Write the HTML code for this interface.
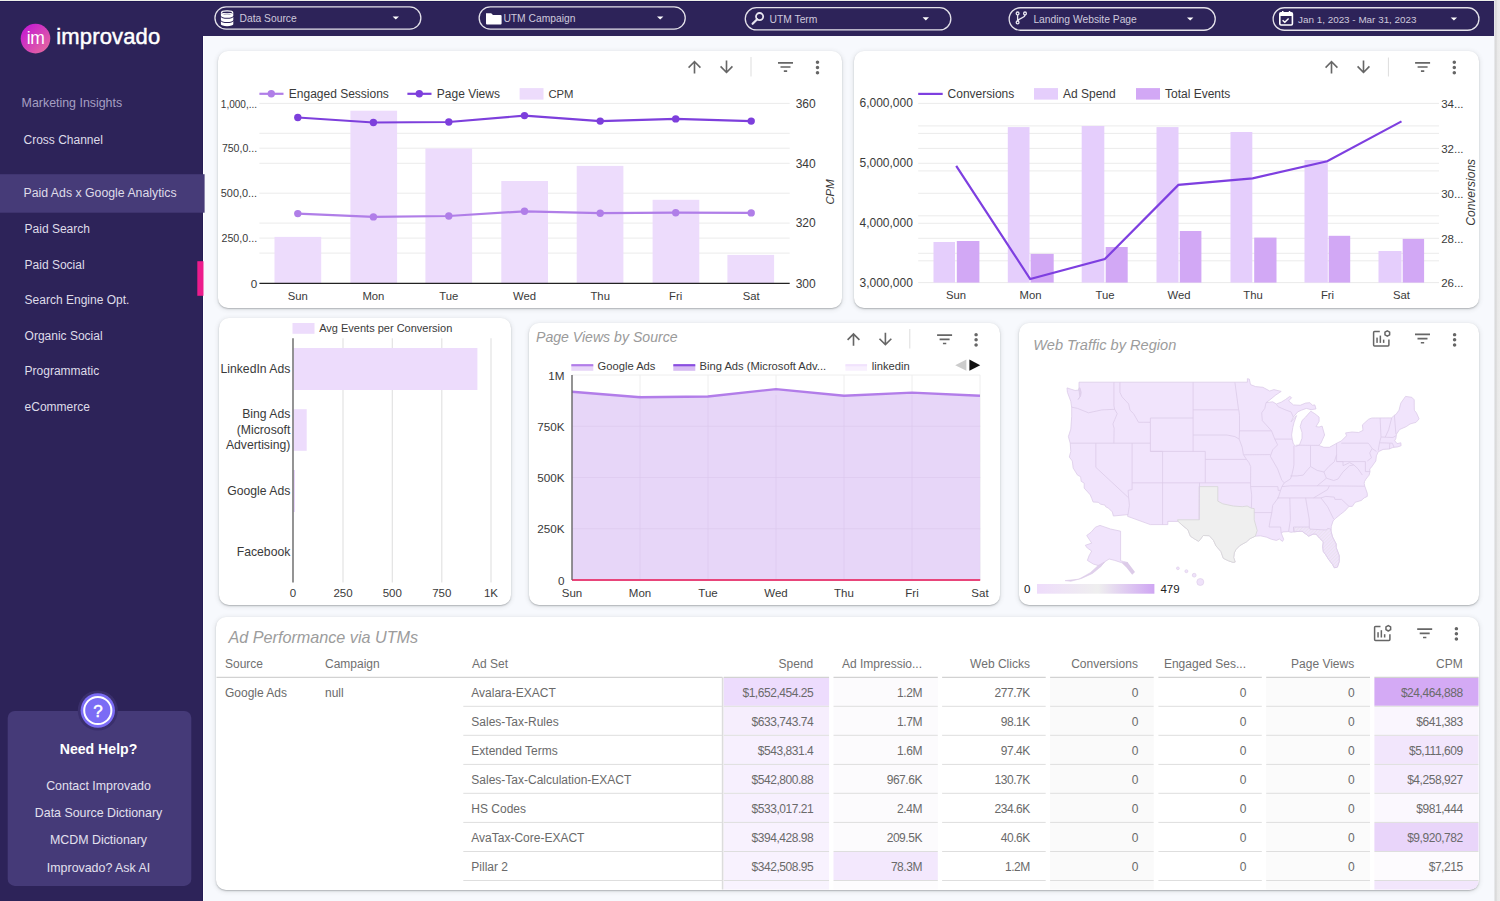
<!DOCTYPE html>
<html><head><meta charset="utf-8"><title>Improvado Dashboard</title>
<style>
html,body{margin:0;padding:0;width:1500px;height:901px;overflow:hidden;background:#f7f9fd;font-family:"Liberation Sans",sans-serif}
.abs{position:absolute}
.card{position:absolute;background:#fff;border-radius:10px;box-shadow:0 1px 1.5px rgba(60,64,67,.32),0 1px 4px 1px rgba(60,64,67,.10)}
svg text{font-family:"Liberation Sans",sans-serif}
</style></head><body>
<div class="abs" style="left:0;top:0;width:1500px;height:901px;background:#f7f9fd"></div>
<div class="abs" style="left:0;top:0;width:202.8px;height:901px;background:#2d2359"></div>
<div class="abs" style="left:202px;top:0;width:1293px;height:36px;background:#2d2359"></div>
<div class="abs" style="left:0;top:0;width:1495px;height:1px;background:#eef0ea"></div>
<div class="abs" style="left:0;top:1px;width:1495px;height:1px;background:#201852"></div>
<div class="abs" style="left:1494px;top:0;width:6px;height:901px;background:linear-gradient(to right,#eceef2 0px,#d9d9d9 1.6px,#dadada 2.2px,#e8e8e8 3.2px,#ececec 6px)"></div>
<div class="abs" style="left:202px;top:36px;width:1px;height:865px;background:#251c55"></div><div class="abs" style="left:203px;top:36px;width:1px;height:865px;background:#ffffff"></div>
<div class="card" style="left:217.5px;top:50.5px;width:624.0px;height:257.8px"></div>
<div class="card" style="left:854.3px;top:50.5px;width:624.4px;height:257.8px"></div>
<div class="card" style="left:218.8px;top:318px;width:292.5px;height:286.5px"></div>
<div class="card" style="left:529.3px;top:323px;width:471.0px;height:282.3px"></div>
<div class="card" style="left:1018.7px;top:323.3px;width:460.0px;height:282.0px"></div>
<div class="card" style="left:216.3px;top:616.7px;width:1262.7px;height:273.5px"></div>
<svg class="abs" style="left:0;top:0" width="1500" height="901" viewBox="0 0 1500 901">
<defs>
<linearGradient id="logoGrad" x1="0" y1="0" x2="1" y2="1"><stop offset="0" stop-color="#c010d8"/><stop offset="1" stop-color="#e8709a"/></linearGradient>
<linearGradient id="legGrad" x1="0" y1="0" x2="1" y2="0"><stop offset="0" stop-color="#eedcfb"/><stop offset="0.52" stop-color="#efefef"/><stop offset="1" stop-color="#cfa6f3"/></linearGradient>
<pattern id="hatch" width="2.4" height="2.4" patternUnits="userSpaceOnUse" patternTransform="rotate(45)"><rect width="2.4" height="2.4" fill="#f1e4fc"/><rect width="0.9" height="2.4" fill="#e9e2ee"/></pattern>
<clipPath id="tblClip"><rect x="216.3" y="616.7" width="1262.7" height="273.5" rx="10"/></clipPath>
</defs>
<circle cx="35.50" cy="38.60" r="14.8" fill="url(#logoGrad)" />
<text x="35.60" y="43.90" font-size="17.5" fill="#ffffff" text-anchor="middle" letter-spacing="-0.4">im</text>
<text x="56.30" y="43.80" font-size="22.0" fill="#ffffff" letter-spacing="0.15" stroke="#ffffff" stroke-width="0.45">improvado</text>
<text x="21.60" y="107.40" font-size="12.4" fill="#a59fc2" >Marketing Insights</text>
<text x="23.50" y="144.20" font-size="12" fill="#dfdce9" >Cross Channel</text>
<rect x="0.00" y="174.20" width="204.60" height="38.50" fill="#463b78" />
<text x="23.50" y="197.30" font-size="12.3" fill="#dfdce9" >Paid Ads x Google Analytics</text>
<text x="24.60" y="233.20" font-size="12" fill="#dfdce9" >Paid Search</text>
<text x="24.60" y="268.50" font-size="12" fill="#dfdce9" >Paid Social</text>
<text x="24.60" y="304.40" font-size="12" fill="#dfdce9" >Search Engine Opt.</text>
<text x="24.60" y="339.70" font-size="12" fill="#dfdce9" >Organic Social</text>
<text x="24.60" y="375.30" font-size="12" fill="#dfdce9" >Programmatic</text>
<text x="24.60" y="411.10" font-size="12" fill="#dfdce9" >eCommerce</text>
<rect x="197.30" y="261.20" width="6.20" height="34.60" fill="#ec1c8c" />
<rect x="7.7" y="710.9" width="183.6" height="175" rx="7" fill="#453a78"/>
<circle cx="97.80" cy="710.50" r="20" fill="#3a2f6c" />
<circle cx="97.80" cy="710.50" r="17.2" fill="#7b6cf5" />
<circle cx="97.80" cy="710.50" r="13.6" fill="none" stroke="#ffffff" stroke-width="2"/>
<text x="97.90" y="716.80" font-size="17" fill="#ffffff" text-anchor="middle" stroke="#ffffff" stroke-width="0.5">?</text>
<text x="98.50" y="753.80" font-size="14.1" fill="#ffffff" text-anchor="middle" font-weight="bold" >Need Help?</text>
<text x="98.50" y="789.80" font-size="12.4" fill="#e3e0ee" text-anchor="middle" >Contact Improvado</text>
<text x="98.50" y="817.30" font-size="12.4" fill="#e3e0ee" text-anchor="middle" >Data Source Dictionary</text>
<text x="98.50" y="844.40" font-size="12.4" fill="#e3e0ee" text-anchor="middle" >MCDM Dictionary</text>
<text x="98.50" y="872.00" font-size="12.4" fill="#e3e0ee" text-anchor="middle" >Improvado? Ask AI</text>
<rect x="214.95" y="6.85" width="205.90" height="22.30" rx="11.15" fill="none" stroke="#e4e2ea" stroke-width="1.3"/>
<path d="M392.60 16.40 L399.00 16.40 L395.80 19.60 Z" fill="#ffffff"/>
<path d="M220.90 12.60 v3.2 a6.2 2 0 0 0 12.4 0 v-3.2 a6.2 2 0 0 1 -12.4 0z" fill="#ffffff"/>
<path d="M220.90 16.80 v3.2 a6.2 2 0 0 0 12.4 0 v-3.2 a6.2 2 0 0 1 -12.4 0z" fill="#ffffff"/>
<path d="M220.90 21.00 v3.2 a6.2 2 0 0 0 12.4 0 v-3.2 a6.2 2 0 0 1 -12.4 0z" fill="#ffffff"/>
<ellipse cx="227.10" cy="12.3" rx="5.6" ry="1.5" fill="#2d2359" stroke="#ffffff" stroke-width="1.2"/>
<text x="239.50" y="22.20" font-size="10.3" fill="#cdc9dc" >Data Source</text>
<rect x="479.15" y="6.85" width="206.10" height="22.30" rx="11.15" fill="none" stroke="#e4e2ea" stroke-width="1.3"/>
<path d="M657.00 16.40 L663.40 16.40 L660.20 19.60 Z" fill="#ffffff"/>
<path d="M486 13.2 h5.2 l1.8 1.8 h7.6 a1 1 0 0 1 1 1 v7.6 a1 1 0 0 1 -1 1 h-13.6 a1 1 0 0 1 -1 -1z" fill="#ffffff"/>
<text x="503.40" y="22.20" font-size="10.3" fill="#cdc9dc" >UTM Campaign</text>
<rect x="745.25" y="7.65" width="205.60" height="22.30" rx="11.15" fill="none" stroke="#e4e2ea" stroke-width="1.3"/>
<path d="M922.60 17.20 L929.00 17.20 L925.80 20.40 Z" fill="#ffffff"/>
<circle cx="759.6" cy="16.6" r="3.6" fill="none" stroke="#e8e6f0" stroke-width="1.8"/><path d="M757.2 19.2 L752.6 23.8" stroke="#e8e6f0" stroke-width="2.2" stroke-linecap="round"/>
<text x="769.50" y="23.00" font-size="10.3" fill="#cdc9dc" >UTM Term</text>
<rect x="1009.15" y="7.75" width="206.10" height="22.50" rx="11.25" fill="none" stroke="#e4e2ea" stroke-width="1.3"/>
<path d="M1187.00 17.40 L1193.40 17.40 L1190.20 20.60 Z" fill="#ffffff"/>
<g fill="none" stroke="#e8e6f0" stroke-width="1.3"><circle cx="1017.6" cy="13.4" r="1.4"/><circle cx="1017.6" cy="22.4" r="1.4"/><circle cx="1025" cy="13.4" r="1.4"/><path d="M1017.6 14.8 V21 M1025 14.8 C1025 18.5 1018.5 17.5 1017.8 21"/></g>
<text x="1033.40" y="23.20" font-size="10.3" fill="#cdc9dc" >Landing Website Page</text>
<rect x="1273.15" y="7.75" width="205.80" height="22.50" rx="11.25" fill="none" stroke="#e4e2ea" stroke-width="1.3"/>
<path d="M1450.70 17.40 L1457.10 17.40 L1453.90 20.60 Z" fill="#ffffff"/>
<g><rect x="1279.8" y="12.8" width="12.6" height="12.2" rx="1.2" fill="none" stroke="#ffffff" stroke-width="1.6"/><rect x="1279.8" y="12.8" width="12.6" height="3.2" fill="#ffffff"/><rect x="1282" y="11" width="1.5" height="2.6" fill="#ffffff"/><rect x="1288.8" y="11" width="1.5" height="2.6" fill="#ffffff"/><path d="M1282.6 20.2 l2.2 2.1 l3.8 -3.9" fill="none" stroke="#ffffff" stroke-width="1.4"/></g>
<text x="1298.00" y="23.20" font-size="9.9" fill="#cdc9dc" >Jan 1, 2023 - Mar 31, 2023</text>
<path d="M4 12l1.41 1.41L11 7.83V20h2V7.83l5.58 5.59L20 12l-8-8-8 8z" fill="#666666" transform="translate(684.75,57.25) scale(0.8125)"/>
<path d="M20 12l-1.41-1.41L13 16.17V4h-2v12.17l-5.58-5.59L4 12l8 8 8-8z" fill="#666666" transform="translate(716.75,57.25) scale(0.8125)"/>
<line x1="751.00" y1="57.00" x2="751.00" y2="76.50" stroke="#dddddd" stroke-width="1" />
<path d="M10 18h4v-2h-4v2zM3 6v2h18V6H3zm3 7h12v-2H6v2z" fill="#666666" transform="translate(775.50,57.00) scale(0.833)"/>
<path d="M12 8c1.1 0 2-.9 2-2s-.9-2-2-2-2 .9-2 2 .9 2 2 2zm0 2c-1.1 0-2 .9-2 2s.9 2 2 2 2-.9 2-2-.9-2-2-2zm0 6c-1.1 0-2 .9-2 2s.9 2 2 2 2-.9 2-2-.9-2-2-2z" fill="#666666" transform="translate(807.18,57.18) scale(0.86)"/>
<line x1="259.40" y1="103.40" x2="789.70" y2="103.40" stroke="#ebebeb" stroke-width="1" />
<line x1="259.40" y1="133.30" x2="789.70" y2="133.30" stroke="#ebebeb" stroke-width="1" />
<line x1="259.40" y1="148.20" x2="789.70" y2="148.20" stroke="#ebebeb" stroke-width="1" />
<line x1="259.40" y1="163.30" x2="789.70" y2="163.30" stroke="#ebebeb" stroke-width="1" />
<line x1="259.40" y1="193.20" x2="789.70" y2="193.20" stroke="#ebebeb" stroke-width="1" />
<line x1="259.40" y1="223.10" x2="789.70" y2="223.10" stroke="#ebebeb" stroke-width="1" />
<line x1="259.40" y1="238.10" x2="789.70" y2="238.10" stroke="#ebebeb" stroke-width="1" />
<line x1="259.40" y1="253.10" x2="789.70" y2="253.10" stroke="#ebebeb" stroke-width="1" />
<rect x="274.50" y="236.90" width="46.70" height="46.40" fill="#eddcfc" />
<rect x="350.40" y="110.70" width="46.70" height="172.60" fill="#eddcfc" />
<rect x="425.40" y="148.40" width="46.70" height="134.90" fill="#eddcfc" />
<rect x="501.30" y="181.00" width="46.70" height="102.30" fill="#eddcfc" />
<rect x="576.70" y="165.90" width="46.70" height="117.40" fill="#eddcfc" />
<rect x="652.60" y="199.80" width="46.70" height="83.50" fill="#eddcfc" />
<rect x="727.40" y="254.90" width="46.70" height="28.40" fill="#eddcfc" />
<line x1="259.40" y1="283.40" x2="789.70" y2="283.40" stroke="#222222" stroke-width="1.3" />
<polyline points="297.80,213.60 373.40,216.90 448.80,216.00 524.50,211.30 600.20,213.20 675.70,212.70 751.20,212.90" stroke="#b07ee8" stroke-width="2.2" fill="none" />
<circle cx="297.80" cy="213.60" r="3.7" fill="#b07ee8" />
<circle cx="373.40" cy="216.90" r="3.7" fill="#b07ee8" />
<circle cx="448.80" cy="216.00" r="3.7" fill="#b07ee8" />
<circle cx="524.50" cy="211.30" r="3.7" fill="#b07ee8" />
<circle cx="600.20" cy="213.20" r="3.7" fill="#b07ee8" />
<circle cx="675.70" cy="212.70" r="3.7" fill="#b07ee8" />
<circle cx="751.20" cy="212.90" r="3.7" fill="#b07ee8" />
<polyline points="297.80,117.50 373.40,122.50 448.80,122.00 524.50,115.60 600.20,121.10 675.70,118.90 751.20,121.10" stroke="#7d3fdc" stroke-width="2.2" fill="none" />
<circle cx="297.80" cy="117.50" r="3.7" fill="#7d3fdc" />
<circle cx="373.40" cy="122.50" r="3.7" fill="#7d3fdc" />
<circle cx="448.80" cy="122.00" r="3.7" fill="#7d3fdc" />
<circle cx="524.50" cy="115.60" r="3.7" fill="#7d3fdc" />
<circle cx="600.20" cy="121.10" r="3.7" fill="#7d3fdc" />
<circle cx="675.70" cy="118.90" r="3.7" fill="#7d3fdc" />
<circle cx="751.20" cy="121.10" r="3.7" fill="#7d3fdc" />
<line x1="259.40" y1="93.80" x2="283.50" y2="93.80" stroke="#b07ee8" stroke-width="2.2" />
<circle cx="271.30" cy="93.80" r="3.7" fill="#b07ee8" />
<text x="288.80" y="97.90" font-size="12" fill="#3a3a3a" >Engaged Sessions</text>
<line x1="407.40" y1="93.80" x2="431.50" y2="93.80" stroke="#7d3fdc" stroke-width="2.2" />
<circle cx="419.30" cy="93.80" r="3.7" fill="#7d3fdc" />
<text x="436.80" y="97.90" font-size="12" fill="#3a3a3a" >Page Views</text>
<rect x="519.60" y="88.10" width="23.90" height="11.50" fill="#eddcfc" />
<text x="548.40" y="97.90" font-size="11.3" fill="#3a3a3a" >CPM</text>
<text x="257.10" y="107.60" font-size="11.6" fill="#3a3a3a" text-anchor="end"  textLength="36.3" lengthAdjust="spacingAndGlyphs">1,000,...</text>
<text x="257.10" y="152.40" font-size="11.6" fill="#3a3a3a" text-anchor="end"  textLength="35.2" lengthAdjust="spacingAndGlyphs">750,0...</text>
<text x="257.10" y="197.40" font-size="11.6" fill="#3a3a3a" text-anchor="end"  textLength="36.3" lengthAdjust="spacingAndGlyphs">500,0...</text>
<text x="257.10" y="242.30" font-size="11.6" fill="#3a3a3a" text-anchor="end"  textLength="35.6" lengthAdjust="spacingAndGlyphs">250,0...</text>
<text x="257.10" y="287.60" font-size="11.6" fill="#3a3a3a" text-anchor="end" >0</text>
<text x="795.70" y="107.70" font-size="12" fill="#3a3a3a" >360</text>
<text x="795.70" y="167.60" font-size="12" fill="#3a3a3a" >340</text>
<text x="795.70" y="227.40" font-size="12" fill="#3a3a3a" >320</text>
<text x="795.70" y="287.70" font-size="12" fill="#3a3a3a" >300</text>
<text x="0.00" y="0.00" font-size="11.3" fill="#3a3a3a" text-anchor="middle" font-style="italic" transform="translate(833.6,192) rotate(-90)">CPM</text>
<text x="297.80" y="299.80" font-size="11.3" fill="#3a3a3a" text-anchor="middle" >Sun</text>
<text x="373.40" y="299.80" font-size="11.3" fill="#3a3a3a" text-anchor="middle" >Mon</text>
<text x="448.80" y="299.80" font-size="11.3" fill="#3a3a3a" text-anchor="middle" >Tue</text>
<text x="524.50" y="299.80" font-size="11.3" fill="#3a3a3a" text-anchor="middle" >Wed</text>
<text x="600.20" y="299.80" font-size="11.3" fill="#3a3a3a" text-anchor="middle" >Thu</text>
<text x="675.70" y="299.80" font-size="11.3" fill="#3a3a3a" text-anchor="middle" >Fri</text>
<text x="751.20" y="299.80" font-size="11.3" fill="#3a3a3a" text-anchor="middle" >Sat</text>
<path d="M4 12l1.41 1.41L11 7.83V20h2V7.83l5.58 5.59L20 12l-8-8-8 8z" fill="#666666" transform="translate(1321.75,57.25) scale(0.8125)"/>
<path d="M20 12l-1.41-1.41L13 16.17V4h-2v12.17l-5.58-5.59L4 12l8 8 8-8z" fill="#666666" transform="translate(1353.75,57.25) scale(0.8125)"/>
<line x1="1388.40" y1="57.50" x2="1388.40" y2="76.50" stroke="#dddddd" stroke-width="1" />
<path d="M10 18h4v-2h-4v2zM3 6v2h18V6H3zm3 7h12v-2H6v2z" fill="#666666" transform="translate(1412.60,57.00) scale(0.833)"/>
<path d="M12 8c1.1 0 2-.9 2-2s-.9-2-2-2-2 .9-2 2 .9 2 2 2zm0 2c-1.1 0-2 .9-2 2s.9 2 2 2 2-.9 2-2-.9-2-2-2zm0 6c-1.1 0-2 .9-2 2s.9 2 2 2 2-.9 2-2-.9-2-2-2z" fill="#666666" transform="translate(1443.98,57.18) scale(0.86)"/>
<line x1="918.20" y1="103.40" x2="1439.00" y2="103.40" stroke="#ebebeb" stroke-width="1" />
<line x1="918.20" y1="125.90" x2="1439.00" y2="125.90" stroke="#ebebeb" stroke-width="1" />
<line x1="918.20" y1="133.40" x2="1439.00" y2="133.40" stroke="#ebebeb" stroke-width="1" />
<line x1="918.20" y1="148.40" x2="1439.00" y2="148.40" stroke="#ebebeb" stroke-width="1" />
<line x1="918.20" y1="163.30" x2="1439.00" y2="163.30" stroke="#ebebeb" stroke-width="1" />
<line x1="918.20" y1="170.90" x2="1439.00" y2="170.90" stroke="#ebebeb" stroke-width="1" />
<line x1="918.20" y1="193.30" x2="1439.00" y2="193.30" stroke="#ebebeb" stroke-width="1" />
<line x1="918.20" y1="215.80" x2="1439.00" y2="215.80" stroke="#ebebeb" stroke-width="1" />
<line x1="918.20" y1="223.30" x2="1439.00" y2="223.30" stroke="#ebebeb" stroke-width="1" />
<line x1="918.20" y1="238.30" x2="1439.00" y2="238.30" stroke="#ebebeb" stroke-width="1" />
<line x1="918.20" y1="253.30" x2="1439.00" y2="253.30" stroke="#ebebeb" stroke-width="1" />
<line x1="918.20" y1="260.80" x2="1439.00" y2="260.80" stroke="#ebebeb" stroke-width="1" />
<line x1="918.20" y1="282.60" x2="1439.00" y2="282.60" stroke="#ebebeb" stroke-width="1" />
<rect x="933.50" y="242.00" width="21.50" height="40.60" fill="#e5cefc" />
<rect x="956.80" y="241.00" width="22.60" height="41.60" fill="#d2a8f5" />
<rect x="1007.80" y="127.10" width="21.70" height="155.50" fill="#e5cefc" />
<rect x="1030.60" y="253.90" width="23.10" height="28.70" fill="#d2a8f5" />
<rect x="1081.70" y="126.00" width="22.60" height="156.60" fill="#e5cefc" />
<rect x="1105.70" y="247.00" width="22.00" height="35.60" fill="#d2a8f5" />
<rect x="1156.50" y="127.10" width="22.00" height="155.50" fill="#e5cefc" />
<rect x="1179.80" y="231.00" width="21.60" height="51.60" fill="#d2a8f5" />
<rect x="1230.50" y="132.00" width="21.80" height="150.60" fill="#e5cefc" />
<rect x="1254.20" y="237.60" width="22.30" height="45.00" fill="#d2a8f5" />
<rect x="1304.50" y="160.00" width="23.30" height="122.60" fill="#e5cefc" />
<rect x="1328.70" y="235.80" width="21.50" height="46.80" fill="#d2a8f5" />
<rect x="1378.50" y="251.00" width="23.00" height="31.60" fill="#e5cefc" />
<rect x="1402.70" y="238.90" width="21.40" height="43.70" fill="#d2a8f5" />
<polyline points="956.20,165.80 1030.20,279.00 1104.80,259.10 1178.40,184.90 1252.60,178.30 1327.20,161.20 1401.50,121.40" stroke="#7e3fe0" stroke-width="2.2" fill="none" />
<line x1="918.20" y1="93.90" x2="942.70" y2="93.90" stroke="#7e3fe0" stroke-width="2.2" />
<text x="947.60" y="97.90" font-size="12" fill="#3a3a3a" >Conversions</text>
<rect x="1034.00" y="88.10" width="24.00" height="11.50" fill="#e5cefc" />
<text x="1063.00" y="97.90" font-size="12" fill="#3a3a3a" >Ad Spend</text>
<rect x="1136.00" y="88.10" width="24.00" height="11.50" fill="#d2a8f5" />
<text x="1165.00" y="97.90" font-size="12" fill="#3a3a3a" >Total Events</text>
<text x="912.90" y="107.30" font-size="12" fill="#3a3a3a" text-anchor="end" >6,000,000</text>
<text x="912.90" y="167.20" font-size="12" fill="#3a3a3a" text-anchor="end" >5,000,000</text>
<text x="912.90" y="227.20" font-size="12" fill="#3a3a3a" text-anchor="end" >4,000,000</text>
<text x="912.90" y="286.50" font-size="12" fill="#3a3a3a" text-anchor="end" >3,000,000</text>
<text x="1441.20" y="107.60" font-size="11.5" fill="#3a3a3a" >34...</text>
<text x="1441.20" y="152.60" font-size="11.5" fill="#3a3a3a" >32...</text>
<text x="1441.20" y="197.50" font-size="11.5" fill="#3a3a3a" >30...</text>
<text x="1441.20" y="242.50" font-size="11.5" fill="#3a3a3a" >28...</text>
<text x="1441.20" y="286.80" font-size="11.5" fill="#3a3a3a" >26...</text>
<text x="0.00" y="0.00" font-size="12" fill="#3a3a3a" text-anchor="middle" font-style="italic" transform="translate(1474.8,192.3) rotate(-90)">Conversions</text>
<text x="956.00" y="299.40" font-size="11.3" fill="#3a3a3a" text-anchor="middle" >Sun</text>
<text x="1030.50" y="299.40" font-size="11.3" fill="#3a3a3a" text-anchor="middle" >Mon</text>
<text x="1105.00" y="299.40" font-size="11.3" fill="#3a3a3a" text-anchor="middle" >Tue</text>
<text x="1179.00" y="299.40" font-size="11.3" fill="#3a3a3a" text-anchor="middle" >Wed</text>
<text x="1253.00" y="299.40" font-size="11.3" fill="#3a3a3a" text-anchor="middle" >Thu</text>
<text x="1327.50" y="299.40" font-size="11.3" fill="#3a3a3a" text-anchor="middle" >Fri</text>
<text x="1401.50" y="299.40" font-size="11.3" fill="#3a3a3a" text-anchor="middle" >Sat</text>
<rect x="292.50" y="323.00" width="22.00" height="10.80" fill="#eddcfc" />
<text x="319.20" y="332.30" font-size="11" fill="#3a3a3a" >Avg Events per Conversion</text>
<line x1="343.00" y1="338.30" x2="343.00" y2="582.40" stroke="#e3e3e3" stroke-width="1.2" />
<line x1="392.30" y1="338.30" x2="392.30" y2="582.40" stroke="#e3e3e3" stroke-width="1.2" />
<line x1="441.80" y1="338.30" x2="441.80" y2="582.40" stroke="#e3e3e3" stroke-width="1.2" />
<line x1="491.00" y1="338.30" x2="491.00" y2="582.40" stroke="#e3e3e3" stroke-width="1.2" />
<rect x="293.60" y="348.00" width="183.80" height="42.00" fill="#eddcfc" />
<rect x="293.60" y="409.20" width="13.10" height="41.60" fill="#eddcfc" />
<rect x="293.60" y="470.00" width="1.20" height="42.00" fill="#e3ccfa" />
<line x1="293.00" y1="338.30" x2="293.00" y2="582.40" stroke="#666666" stroke-width="1.4" />
<text x="290.30" y="372.80" font-size="12.2" fill="#3a3a3a" text-anchor="end" >LinkedIn Ads</text>
<text x="290.30" y="417.50" font-size="12.2" fill="#3a3a3a" text-anchor="end" >Bing Ads</text>
<text x="290.30" y="433.60" font-size="12.2" fill="#3a3a3a" text-anchor="end" >(Microsoft</text>
<text x="290.30" y="449.30" font-size="12.2" fill="#3a3a3a" text-anchor="end" >Advertising)</text>
<text x="290.30" y="495.00" font-size="12.2" fill="#3a3a3a" text-anchor="end" >Google Ads</text>
<text x="290.30" y="556.00" font-size="12.2" fill="#3a3a3a" text-anchor="end" >Facebook</text>
<text x="293.00" y="597.40" font-size="11.5" fill="#3a3a3a" text-anchor="middle" >0</text>
<text x="343.00" y="597.40" font-size="11.5" fill="#3a3a3a" text-anchor="middle" >250</text>
<text x="392.30" y="597.40" font-size="11.5" fill="#3a3a3a" text-anchor="middle" >500</text>
<text x="441.80" y="597.40" font-size="11.5" fill="#3a3a3a" text-anchor="middle" >750</text>
<text x="491.00" y="597.40" font-size="11.5" fill="#3a3a3a" text-anchor="middle" >1K</text>
<text x="536.00" y="341.60" font-size="14.1" fill="#9a9a9a" font-style="italic" >Page Views by Source</text>
<path d="M4 12l1.41 1.41L11 7.83V20h2V7.83l5.58 5.59L20 12l-8-8-8 8z" fill="#666666" transform="translate(843.75,329.55) scale(0.8125)"/>
<path d="M20 12l-1.41-1.41L13 16.17V4h-2v12.17l-5.58-5.59L4 12l8 8 8-8z" fill="#666666" transform="translate(875.65,329.55) scale(0.8125)"/>
<line x1="909.80" y1="329.00" x2="909.80" y2="348.50" stroke="#dddddd" stroke-width="1" />
<path d="M10 18h4v-2h-4v2zM3 6v2h18V6H3zm3 7h12v-2H6v2z" fill="#666666" transform="translate(934.60,329.30) scale(0.833)"/>
<path d="M12 8c1.1 0 2-.9 2-2s-.9-2-2-2-2 .9-2 2 .9 2 2 2zm0 2c-1.1 0-2 .9-2 2s.9 2 2 2 2-.9 2-2-.9-2-2-2zm0 6c-1.1 0-2 .9-2 2s.9 2 2 2 2-.9 2-2-.9-2-2-2z" fill="#666666" transform="translate(965.78,329.48) scale(0.86)"/>
<line x1="572.00" y1="375.00" x2="980.20" y2="375.00" stroke="#eeeeee" stroke-width="1" />
<line x1="572.00" y1="426.25" x2="980.20" y2="426.25" stroke="#eeeeee" stroke-width="1" />
<line x1="572.00" y1="477.50" x2="980.20" y2="477.50" stroke="#eeeeee" stroke-width="1" />
<line x1="572.00" y1="528.75" x2="980.20" y2="528.75" stroke="#eeeeee" stroke-width="1" />
<line x1="640.00" y1="375.00" x2="640.00" y2="580.00" stroke="#eeeeee" stroke-width="1" />
<line x1="708.00" y1="375.00" x2="708.00" y2="580.00" stroke="#eeeeee" stroke-width="1" />
<line x1="776.00" y1="375.00" x2="776.00" y2="580.00" stroke="#eeeeee" stroke-width="1" />
<line x1="844.00" y1="375.00" x2="844.00" y2="580.00" stroke="#eeeeee" stroke-width="1" />
<line x1="912.00" y1="375.00" x2="912.00" y2="580.00" stroke="#eeeeee" stroke-width="1" />
<line x1="980.00" y1="375.00" x2="980.00" y2="580.00" stroke="#eeeeee" stroke-width="1" />
<path d="M572 580 L572.00 391.70 L640.00 397.30 L708.00 396.50 L776.00 389.10 L844.00 395.80 L912.00 392.60 L980.00 395.80 L980.2 580 Z" fill="#e2cdf7" fill-opacity="0.82"/>
<line x1="572.00" y1="426.25" x2="980.20" y2="426.25" stroke="#dcc8ef" stroke-width="0.8" opacity="0.6"/>
<line x1="572.00" y1="477.50" x2="980.20" y2="477.50" stroke="#dcc8ef" stroke-width="0.8" opacity="0.6"/>
<line x1="572.00" y1="528.75" x2="980.20" y2="528.75" stroke="#dcc8ef" stroke-width="0.8" opacity="0.6"/>
<line x1="640.00" y1="395.00" x2="640.00" y2="580.00" stroke="#dcc8ef" stroke-width="0.8" opacity="0.6"/>
<line x1="708.00" y1="395.00" x2="708.00" y2="580.00" stroke="#dcc8ef" stroke-width="0.8" opacity="0.6"/>
<line x1="776.00" y1="395.00" x2="776.00" y2="580.00" stroke="#dcc8ef" stroke-width="0.8" opacity="0.6"/>
<line x1="844.00" y1="395.00" x2="844.00" y2="580.00" stroke="#dcc8ef" stroke-width="0.8" opacity="0.6"/>
<line x1="912.00" y1="395.00" x2="912.00" y2="580.00" stroke="#dcc8ef" stroke-width="0.8" opacity="0.6"/>
<polyline points="572.00,391.70 640.00,397.30 708.00,396.50 776.00,389.10 844.00,395.80 912.00,392.60 980.00,395.80" stroke="#b27de9" stroke-width="2.4" fill="none" />
<line x1="572.00" y1="580.00" x2="980.20" y2="580.00" stroke="#e8457a" stroke-width="2" />
<line x1="572.00" y1="375.00" x2="572.00" y2="580.00" stroke="#666666" stroke-width="1.4" />
<rect x="571.30" y="365.20" width="22.00" height="5.60" fill="#e8d6f8" />
<line x1="571.30" y1="365.20" x2="593.30" y2="365.20" stroke="#b27de9" stroke-width="2.2" />
<text x="597.60" y="369.60" font-size="11.2" fill="#3a3a3a" >Google Ads</text>
<rect x="673.30" y="365.20" width="22.00" height="5.60" fill="#d8bcf3" />
<line x1="673.30" y1="365.20" x2="695.30" y2="365.20" stroke="#8a4ee0" stroke-width="2.2" />
<text x="699.50" y="369.60" font-size="11.2" fill="#3a3a3a" >Bing Ads (Microsoft Adv...</text>
<rect x="845.40" y="365.20" width="21.70" height="5.60" fill="#f8f0fe" />
<line x1="845.40" y1="365.20" x2="867.10" y2="365.20" stroke="#f1e3fd" stroke-width="2.2" />
<text x="871.80" y="369.60" font-size="11.2" fill="#3a3a3a" >linkedin</text>
<path d="M955.2 365.2 L966.4 359.6 L966.4 370.8 Z" fill="#cccccc"/><path d="M969.4 359.6 L980.2 365.2 L969.4 370.8 Z" fill="#111111"/>
<text x="564.60" y="379.50" font-size="11.7" fill="#3a3a3a" text-anchor="end" >1M</text>
<text x="564.60" y="430.75" font-size="11.7" fill="#3a3a3a" text-anchor="end" >750K</text>
<text x="564.60" y="482.00" font-size="11.7" fill="#3a3a3a" text-anchor="end" >500K</text>
<text x="564.60" y="533.25" font-size="11.7" fill="#3a3a3a" text-anchor="end" >250K</text>
<text x="564.60" y="584.50" font-size="11.7" fill="#3a3a3a" text-anchor="end" >0</text>
<text x="572.00" y="597.00" font-size="11.5" fill="#3a3a3a" text-anchor="middle" >Sun</text>
<text x="640.00" y="597.00" font-size="11.5" fill="#3a3a3a" text-anchor="middle" >Mon</text>
<text x="708.00" y="597.00" font-size="11.5" fill="#3a3a3a" text-anchor="middle" >Tue</text>
<text x="776.00" y="597.00" font-size="11.5" fill="#3a3a3a" text-anchor="middle" >Wed</text>
<text x="844.00" y="597.00" font-size="11.5" fill="#3a3a3a" text-anchor="middle" >Thu</text>
<text x="912.00" y="597.00" font-size="11.5" fill="#3a3a3a" text-anchor="middle" >Fri</text>
<text x="980.00" y="597.00" font-size="11.5" fill="#3a3a3a" text-anchor="middle" >Sat</text>
<g clip-path="url(#tblClip)">
<text x="228.40" y="643.00" font-size="16.2" fill="#9c9c9c" font-style="italic" >Ad Performance via UTMs</text>
<g fill="none" stroke="#666666" stroke-width="1.5"><path d="M1380.5 626.4 H1375.5 a0.9 0.9 0 0 0 -0.9 0.9 V639.6 a0.9 0.9 0 0 0 0.9 0.9 H1389 a0.9 0.9 0 0 0 0.9 -0.9 V634.2"/></g>
<g fill="#666666"><rect x="1377.3" y="632.2" width="1.5" height="5.3"/><rect x="1380.6" y="630.2" width="1.5" height="7.3"/><rect x="1383.9" y="634.2" width="1.5" height="3.3"/></g>
<path d="M1388.30 631.00 L1385.96 629.65 L1385.96 626.95 L1388.30 625.60 L1390.64 626.95 L1390.64 629.65 Z" fill="none" stroke="#666666" stroke-width="1.5" stroke-linejoin="round"/>
<path d="M10 18h4v-2h-4v2zM3 6v2h18V6H3zm3 7h12v-2H6v2z" fill="#666666" transform="translate(1414.70,623.30) scale(0.833)"/>
<path d="M12 8c1.1 0 2-.9 2-2s-.9-2-2-2-2 .9-2 2 .9 2 2 2zm0 2c-1.1 0-2 .9-2 2s.9 2 2 2 2-.9 2-2-.9-2-2-2zm0 6c-1.1 0-2 .9-2 2s.9 2 2 2 2-.9 2-2-.9-2-2-2z" fill="#666666" transform="translate(1446.08,623.48) scale(0.86)"/>
<text x="225.00" y="668.00" font-size="12" fill="#707070" >Source</text>
<text x="325.00" y="668.00" font-size="12" fill="#707070" >Campaign</text>
<text x="472.00" y="668.00" font-size="12" fill="#707070" >Ad Set</text>
<text x="813.30" y="668.00" font-size="12" fill="#707070" text-anchor="end" >Spend</text>
<text x="922.00" y="668.00" font-size="12" fill="#707070" text-anchor="end" >Ad Impressio...</text>
<text x="1029.90" y="668.00" font-size="12" fill="#707070" text-anchor="end" >Web Clicks</text>
<text x="1137.90" y="668.00" font-size="12" fill="#707070" text-anchor="end" >Conversions</text>
<text x="1246.00" y="668.00" font-size="12" fill="#707070" text-anchor="end" >Engaged Ses...</text>
<text x="1354.20" y="668.00" font-size="12" fill="#707070" text-anchor="end" >Page Views</text>
<text x="1462.70" y="668.00" font-size="12" fill="#707070" text-anchor="end" >CPM</text>
<rect x="723.70" y="677.80" width="105.40" height="28.00" fill="#eddcfd" />
<rect x="723.70" y="706.80" width="105.40" height="28.00" fill="#f6eefd" />
<rect x="723.70" y="735.80" width="105.40" height="28.10" fill="#f7f0fe" />
<rect x="723.70" y="764.90" width="105.40" height="27.90" fill="#f7f0fe" />
<rect x="723.70" y="793.80" width="105.40" height="28.10" fill="#f7f0fe" />
<rect x="723.70" y="822.90" width="105.40" height="28.10" fill="#f8f2fe" />
<rect x="723.70" y="852.00" width="105.40" height="28.00" fill="#f8f2fe" />
<rect x="723.70" y="881.00" width="105.40" height="8.60" fill="#f8f3fe" />
<rect x="833.50" y="677.80" width="104.30" height="28.00" fill="#fcfbfd" />
<rect x="833.50" y="706.80" width="104.30" height="28.00" fill="#fcfbfd" />
<rect x="833.50" y="735.80" width="104.30" height="28.10" fill="#fcfbfd" />
<rect x="833.50" y="764.90" width="104.30" height="27.90" fill="#fcfbfd" />
<rect x="833.50" y="793.80" width="104.30" height="28.10" fill="#fcfbfd" />
<rect x="833.50" y="822.90" width="104.30" height="28.10" fill="#fcfbfd" />
<rect x="833.50" y="852.00" width="104.30" height="28.00" fill="#f3e8fd" />
<rect x="833.50" y="881.00" width="104.30" height="8.60" fill="#fdfcfe" />
<rect x="1050.10" y="677.80" width="103.60" height="28.00" fill="#fafafa" />
<rect x="1050.10" y="706.80" width="103.60" height="28.00" fill="#fafafa" />
<rect x="1050.10" y="735.80" width="103.60" height="28.10" fill="#fafafa" />
<rect x="1050.10" y="764.90" width="103.60" height="27.90" fill="#fafafa" />
<rect x="1050.10" y="793.80" width="103.60" height="28.10" fill="#fafafa" />
<rect x="1050.10" y="822.90" width="103.60" height="28.10" fill="#fafafa" />
<rect x="1050.10" y="852.00" width="103.60" height="28.00" fill="#fafafa" />
<rect x="1050.10" y="881.00" width="103.60" height="8.60" fill="#fafafa" />
<rect x="1266.20" y="677.80" width="103.80" height="28.00" fill="#fbfbfb" />
<rect x="1266.20" y="706.80" width="103.80" height="28.00" fill="#fbfbfb" />
<rect x="1266.20" y="735.80" width="103.80" height="28.10" fill="#fbfbfb" />
<rect x="1266.20" y="764.90" width="103.80" height="27.90" fill="#fbfbfb" />
<rect x="1266.20" y="793.80" width="103.80" height="28.10" fill="#fbfbfb" />
<rect x="1266.20" y="822.90" width="103.80" height="28.10" fill="#fbfbfb" />
<rect x="1266.20" y="852.00" width="103.80" height="28.00" fill="#fbfbfb" />
<rect x="1266.20" y="881.00" width="103.80" height="8.60" fill="#fbfbfb" />
<rect x="1374.40" y="677.80" width="104.10" height="28.00" fill="#d4aaf5" />
<rect x="1374.40" y="706.80" width="104.10" height="28.00" fill="#faf6fe" />
<rect x="1374.40" y="735.80" width="104.10" height="28.10" fill="#f2e6fc" />
<rect x="1374.40" y="764.90" width="104.10" height="27.90" fill="#f5ecfd" />
<rect x="1374.40" y="793.80" width="104.10" height="28.10" fill="#fbf8fe" />
<rect x="1374.40" y="822.90" width="104.10" height="28.10" fill="#e9d5fa" />
<rect x="1374.40" y="852.00" width="104.10" height="28.00" fill="#fdfbfe" />
<rect x="1374.40" y="881.00" width="104.10" height="8.60" fill="#f2e6fc" />
<line x1="216.30" y1="677.30" x2="722.50" y2="677.30" stroke="#d2d2d2" stroke-width="1.2" />
<line x1="723.70" y1="677.30" x2="829.10" y2="677.30" stroke="#d2d2d2" stroke-width="1.2" />
<line x1="833.50" y1="677.30" x2="937.80" y2="677.30" stroke="#d2d2d2" stroke-width="1.2" />
<line x1="942.10" y1="677.30" x2="1045.70" y2="677.30" stroke="#d2d2d2" stroke-width="1.2" />
<line x1="1050.10" y1="677.30" x2="1153.70" y2="677.30" stroke="#d2d2d2" stroke-width="1.2" />
<line x1="1158.40" y1="677.30" x2="1261.80" y2="677.30" stroke="#d2d2d2" stroke-width="1.2" />
<line x1="1266.20" y1="677.30" x2="1370.00" y2="677.30" stroke="#d2d2d2" stroke-width="1.2" />
<line x1="1374.40" y1="677.30" x2="1478.50" y2="677.30" stroke="#d2d2d2" stroke-width="1.2" />
<line x1="463.30" y1="706.30" x2="722.50" y2="706.30" stroke="#dedede" stroke-width="1" />
<line x1="723.70" y1="706.30" x2="829.10" y2="706.30" stroke="#dedede" stroke-width="1" />
<line x1="833.50" y1="706.30" x2="937.80" y2="706.30" stroke="#dedede" stroke-width="1" />
<line x1="942.10" y1="706.30" x2="1045.70" y2="706.30" stroke="#dedede" stroke-width="1" />
<line x1="1050.10" y1="706.30" x2="1153.70" y2="706.30" stroke="#dedede" stroke-width="1" />
<line x1="1158.40" y1="706.30" x2="1261.80" y2="706.30" stroke="#dedede" stroke-width="1" />
<line x1="1266.20" y1="706.30" x2="1370.00" y2="706.30" stroke="#dedede" stroke-width="1" />
<line x1="1374.40" y1="706.30" x2="1478.50" y2="706.30" stroke="#dedede" stroke-width="1" />
<line x1="463.30" y1="735.30" x2="722.50" y2="735.30" stroke="#dedede" stroke-width="1" />
<line x1="723.70" y1="735.30" x2="829.10" y2="735.30" stroke="#dedede" stroke-width="1" />
<line x1="833.50" y1="735.30" x2="937.80" y2="735.30" stroke="#dedede" stroke-width="1" />
<line x1="942.10" y1="735.30" x2="1045.70" y2="735.30" stroke="#dedede" stroke-width="1" />
<line x1="1050.10" y1="735.30" x2="1153.70" y2="735.30" stroke="#dedede" stroke-width="1" />
<line x1="1158.40" y1="735.30" x2="1261.80" y2="735.30" stroke="#dedede" stroke-width="1" />
<line x1="1266.20" y1="735.30" x2="1370.00" y2="735.30" stroke="#dedede" stroke-width="1" />
<line x1="1374.40" y1="735.30" x2="1478.50" y2="735.30" stroke="#dedede" stroke-width="1" />
<line x1="463.30" y1="764.40" x2="722.50" y2="764.40" stroke="#dedede" stroke-width="1" />
<line x1="723.70" y1="764.40" x2="829.10" y2="764.40" stroke="#dedede" stroke-width="1" />
<line x1="833.50" y1="764.40" x2="937.80" y2="764.40" stroke="#dedede" stroke-width="1" />
<line x1="942.10" y1="764.40" x2="1045.70" y2="764.40" stroke="#dedede" stroke-width="1" />
<line x1="1050.10" y1="764.40" x2="1153.70" y2="764.40" stroke="#dedede" stroke-width="1" />
<line x1="1158.40" y1="764.40" x2="1261.80" y2="764.40" stroke="#dedede" stroke-width="1" />
<line x1="1266.20" y1="764.40" x2="1370.00" y2="764.40" stroke="#dedede" stroke-width="1" />
<line x1="1374.40" y1="764.40" x2="1478.50" y2="764.40" stroke="#dedede" stroke-width="1" />
<line x1="463.30" y1="793.30" x2="722.50" y2="793.30" stroke="#dedede" stroke-width="1" />
<line x1="723.70" y1="793.30" x2="829.10" y2="793.30" stroke="#dedede" stroke-width="1" />
<line x1="833.50" y1="793.30" x2="937.80" y2="793.30" stroke="#dedede" stroke-width="1" />
<line x1="942.10" y1="793.30" x2="1045.70" y2="793.30" stroke="#dedede" stroke-width="1" />
<line x1="1050.10" y1="793.30" x2="1153.70" y2="793.30" stroke="#dedede" stroke-width="1" />
<line x1="1158.40" y1="793.30" x2="1261.80" y2="793.30" stroke="#dedede" stroke-width="1" />
<line x1="1266.20" y1="793.30" x2="1370.00" y2="793.30" stroke="#dedede" stroke-width="1" />
<line x1="1374.40" y1="793.30" x2="1478.50" y2="793.30" stroke="#dedede" stroke-width="1" />
<line x1="463.30" y1="822.40" x2="722.50" y2="822.40" stroke="#dedede" stroke-width="1" />
<line x1="723.70" y1="822.40" x2="829.10" y2="822.40" stroke="#dedede" stroke-width="1" />
<line x1="833.50" y1="822.40" x2="937.80" y2="822.40" stroke="#dedede" stroke-width="1" />
<line x1="942.10" y1="822.40" x2="1045.70" y2="822.40" stroke="#dedede" stroke-width="1" />
<line x1="1050.10" y1="822.40" x2="1153.70" y2="822.40" stroke="#dedede" stroke-width="1" />
<line x1="1158.40" y1="822.40" x2="1261.80" y2="822.40" stroke="#dedede" stroke-width="1" />
<line x1="1266.20" y1="822.40" x2="1370.00" y2="822.40" stroke="#dedede" stroke-width="1" />
<line x1="1374.40" y1="822.40" x2="1478.50" y2="822.40" stroke="#dedede" stroke-width="1" />
<line x1="463.30" y1="851.50" x2="722.50" y2="851.50" stroke="#dedede" stroke-width="1" />
<line x1="723.70" y1="851.50" x2="829.10" y2="851.50" stroke="#dedede" stroke-width="1" />
<line x1="833.50" y1="851.50" x2="937.80" y2="851.50" stroke="#dedede" stroke-width="1" />
<line x1="942.10" y1="851.50" x2="1045.70" y2="851.50" stroke="#dedede" stroke-width="1" />
<line x1="1050.10" y1="851.50" x2="1153.70" y2="851.50" stroke="#dedede" stroke-width="1" />
<line x1="1158.40" y1="851.50" x2="1261.80" y2="851.50" stroke="#dedede" stroke-width="1" />
<line x1="1266.20" y1="851.50" x2="1370.00" y2="851.50" stroke="#dedede" stroke-width="1" />
<line x1="1374.40" y1="851.50" x2="1478.50" y2="851.50" stroke="#dedede" stroke-width="1" />
<line x1="463.30" y1="880.50" x2="722.50" y2="880.50" stroke="#dedede" stroke-width="1" />
<line x1="723.70" y1="880.50" x2="829.10" y2="880.50" stroke="#dedede" stroke-width="1" />
<line x1="833.50" y1="880.50" x2="937.80" y2="880.50" stroke="#dedede" stroke-width="1" />
<line x1="942.10" y1="880.50" x2="1045.70" y2="880.50" stroke="#dedede" stroke-width="1" />
<line x1="1050.10" y1="880.50" x2="1153.70" y2="880.50" stroke="#dedede" stroke-width="1" />
<line x1="1158.40" y1="880.50" x2="1261.80" y2="880.50" stroke="#dedede" stroke-width="1" />
<line x1="1266.20" y1="880.50" x2="1370.00" y2="880.50" stroke="#dedede" stroke-width="1" />
<line x1="1374.40" y1="880.50" x2="1478.50" y2="880.50" stroke="#dedede" stroke-width="1" />
<line x1="722.60" y1="677.30" x2="722.60" y2="889.60" stroke="#dcdcdc" stroke-width="1.6" />
<text x="225.00" y="696.70" font-size="12" fill="#6a6a6a" >Google Ads</text>
<text x="325.00" y="696.70" font-size="12" fill="#6a6a6a" >null</text>
<text x="471.30" y="696.70" font-size="12" fill="#6a6a6a" >Avalara-EXACT</text>
<text x="813.30" y="696.70" font-size="12" fill="#6a6a6a" text-anchor="end" letter-spacing="-0.45">$1,652,454.25</text>
<text x="922.00" y="696.70" font-size="12" fill="#6a6a6a" text-anchor="end" letter-spacing="-0.45">1.2M</text>
<text x="1029.90" y="696.70" font-size="12" fill="#6a6a6a" text-anchor="end" letter-spacing="-0.45">277.7K</text>
<text x="1137.90" y="696.70" font-size="12" fill="#6a6a6a" text-anchor="end" letter-spacing="-0.45">0</text>
<text x="1246.00" y="696.70" font-size="12" fill="#6a6a6a" text-anchor="end" letter-spacing="-0.45">0</text>
<text x="1354.20" y="696.70" font-size="12" fill="#6a6a6a" text-anchor="end" letter-spacing="-0.45">0</text>
<text x="1462.70" y="696.70" font-size="12" fill="#6a6a6a" text-anchor="end" letter-spacing="-0.45">$24,464,888</text>
<text x="471.30" y="725.73" font-size="12" fill="#6a6a6a" >Sales-Tax-Rules</text>
<text x="813.30" y="725.73" font-size="12" fill="#6a6a6a" text-anchor="end" letter-spacing="-0.45">$633,743.74</text>
<text x="922.00" y="725.73" font-size="12" fill="#6a6a6a" text-anchor="end" letter-spacing="-0.45">1.7M</text>
<text x="1029.90" y="725.73" font-size="12" fill="#6a6a6a" text-anchor="end" letter-spacing="-0.45">98.1K</text>
<text x="1137.90" y="725.73" font-size="12" fill="#6a6a6a" text-anchor="end" letter-spacing="-0.45">0</text>
<text x="1246.00" y="725.73" font-size="12" fill="#6a6a6a" text-anchor="end" letter-spacing="-0.45">0</text>
<text x="1354.20" y="725.73" font-size="12" fill="#6a6a6a" text-anchor="end" letter-spacing="-0.45">0</text>
<text x="1462.70" y="725.73" font-size="12" fill="#6a6a6a" text-anchor="end" letter-spacing="-0.45">$641,383</text>
<text x="471.30" y="754.76" font-size="12" fill="#6a6a6a" >Extended Terms</text>
<text x="813.30" y="754.76" font-size="12" fill="#6a6a6a" text-anchor="end" letter-spacing="-0.45">$543,831.4</text>
<text x="922.00" y="754.76" font-size="12" fill="#6a6a6a" text-anchor="end" letter-spacing="-0.45">1.6M</text>
<text x="1029.90" y="754.76" font-size="12" fill="#6a6a6a" text-anchor="end" letter-spacing="-0.45">97.4K</text>
<text x="1137.90" y="754.76" font-size="12" fill="#6a6a6a" text-anchor="end" letter-spacing="-0.45">0</text>
<text x="1246.00" y="754.76" font-size="12" fill="#6a6a6a" text-anchor="end" letter-spacing="-0.45">0</text>
<text x="1354.20" y="754.76" font-size="12" fill="#6a6a6a" text-anchor="end" letter-spacing="-0.45">0</text>
<text x="1462.70" y="754.76" font-size="12" fill="#6a6a6a" text-anchor="end" letter-spacing="-0.45">$5,111,609</text>
<text x="471.30" y="783.79" font-size="12" fill="#6a6a6a" >Sales-Tax-Calculation-EXACT</text>
<text x="813.30" y="783.79" font-size="12" fill="#6a6a6a" text-anchor="end" letter-spacing="-0.45">$542,800.88</text>
<text x="922.00" y="783.79" font-size="12" fill="#6a6a6a" text-anchor="end" letter-spacing="-0.45">967.6K</text>
<text x="1029.90" y="783.79" font-size="12" fill="#6a6a6a" text-anchor="end" letter-spacing="-0.45">130.7K</text>
<text x="1137.90" y="783.79" font-size="12" fill="#6a6a6a" text-anchor="end" letter-spacing="-0.45">0</text>
<text x="1246.00" y="783.79" font-size="12" fill="#6a6a6a" text-anchor="end" letter-spacing="-0.45">0</text>
<text x="1354.20" y="783.79" font-size="12" fill="#6a6a6a" text-anchor="end" letter-spacing="-0.45">0</text>
<text x="1462.70" y="783.79" font-size="12" fill="#6a6a6a" text-anchor="end" letter-spacing="-0.45">$4,258,927</text>
<text x="471.30" y="812.82" font-size="12" fill="#6a6a6a" >HS Codes</text>
<text x="813.30" y="812.82" font-size="12" fill="#6a6a6a" text-anchor="end" letter-spacing="-0.45">$533,017.21</text>
<text x="922.00" y="812.82" font-size="12" fill="#6a6a6a" text-anchor="end" letter-spacing="-0.45">2.4M</text>
<text x="1029.90" y="812.82" font-size="12" fill="#6a6a6a" text-anchor="end" letter-spacing="-0.45">234.6K</text>
<text x="1137.90" y="812.82" font-size="12" fill="#6a6a6a" text-anchor="end" letter-spacing="-0.45">0</text>
<text x="1246.00" y="812.82" font-size="12" fill="#6a6a6a" text-anchor="end" letter-spacing="-0.45">0</text>
<text x="1354.20" y="812.82" font-size="12" fill="#6a6a6a" text-anchor="end" letter-spacing="-0.45">0</text>
<text x="1462.70" y="812.82" font-size="12" fill="#6a6a6a" text-anchor="end" letter-spacing="-0.45">$981,444</text>
<text x="471.30" y="841.85" font-size="12" fill="#6a6a6a" >AvaTax-Core-EXACT</text>
<text x="813.30" y="841.85" font-size="12" fill="#6a6a6a" text-anchor="end" letter-spacing="-0.45">$394,428.98</text>
<text x="922.00" y="841.85" font-size="12" fill="#6a6a6a" text-anchor="end" letter-spacing="-0.45">209.5K</text>
<text x="1029.90" y="841.85" font-size="12" fill="#6a6a6a" text-anchor="end" letter-spacing="-0.45">40.6K</text>
<text x="1137.90" y="841.85" font-size="12" fill="#6a6a6a" text-anchor="end" letter-spacing="-0.45">0</text>
<text x="1246.00" y="841.85" font-size="12" fill="#6a6a6a" text-anchor="end" letter-spacing="-0.45">0</text>
<text x="1354.20" y="841.85" font-size="12" fill="#6a6a6a" text-anchor="end" letter-spacing="-0.45">0</text>
<text x="1462.70" y="841.85" font-size="12" fill="#6a6a6a" text-anchor="end" letter-spacing="-0.45">$9,920,782</text>
<text x="471.30" y="870.88" font-size="12" fill="#6a6a6a" >Pillar 2</text>
<text x="813.30" y="870.88" font-size="12" fill="#6a6a6a" text-anchor="end" letter-spacing="-0.45">$342,508.95</text>
<text x="922.00" y="870.88" font-size="12" fill="#6a6a6a" text-anchor="end" letter-spacing="-0.45">78.3M</text>
<text x="1029.90" y="870.88" font-size="12" fill="#6a6a6a" text-anchor="end" letter-spacing="-0.45">1.2M</text>
<text x="1137.90" y="870.88" font-size="12" fill="#6a6a6a" text-anchor="end" letter-spacing="-0.45">0</text>
<text x="1246.00" y="870.88" font-size="12" fill="#6a6a6a" text-anchor="end" letter-spacing="-0.45">0</text>
<text x="1354.20" y="870.88" font-size="12" fill="#6a6a6a" text-anchor="end" letter-spacing="-0.45">0</text>
<text x="1462.70" y="870.88" font-size="12" fill="#6a6a6a" text-anchor="end" letter-spacing="-0.45">$7,215</text>
</g>
<text x="1033.30" y="349.60" font-size="14.6" fill="#9c9c9c" font-style="italic" >Web Traffic by Region</text>
<g fill="none" stroke="#666666" stroke-width="1.5"><path d="M1379.8 331.6 H1374.5 a0.9 0.9 0 0 0 -0.9 0.9 V345 a0.9 0.9 0 0 0 0.9 0.9 H1388 a0.9 0.9 0 0 0 0.9 -0.9 V339.4"/></g>
<g fill="#666666"><rect x="1376.3" y="337.6" width="1.5" height="5.3"/><rect x="1379.6" y="335.6" width="1.5" height="7.3"/><rect x="1382.9" y="339.6" width="1.5" height="3.3"/></g>
<path d="M1387.30 336.20 L1384.96 334.85 L1384.96 332.15 L1387.30 330.80 L1389.64 332.15 L1389.64 334.85 Z" fill="none" stroke="#666666" stroke-width="1.5" stroke-linejoin="round"/>
<path d="M10 18h4v-2h-4v2zM3 6v2h18V6H3zm3 7h12v-2H6v2z" fill="#666666" transform="translate(1412.50,328.60) scale(0.833)"/>
<path d="M12 8c1.1 0 2-.9 2-2s-.9-2-2-2-2 .9-2 2 .9 2 2 2zm0 2c-1.1 0-2 .9-2 2s.9 2 2 2 2-.9 2-2-.9-2-2-2zm0 6c-1.1 0-2 .9-2 2s.9 2 2 2 2-.9 2-2-.9-2-2-2z" fill="#666666" transform="translate(1444.28,329.48) scale(0.86)"/>
<path d="M1067.0 387.9 L1075.1 390.5 L1079.0 390.0 L1079.0 382.2 L1247.4 382.2 L1247.4 378.7 L1249.3 379.1 L1250.5 384.6 L1255.6 386.6 L1262.9 387.3 L1269.7 391.0 L1273.9 389.6 L1281.2 391.4 L1275.8 395.0 L1269.7 400.0 L1266.0 402.7 L1272.7 401.8 L1276.4 404.0 L1281.2 402.2 L1285.5 399.5 L1289.8 396.4 L1291.6 397.7 L1288.6 400.9 L1293.4 404.9 L1300.2 405.3 L1305.6 403.1 L1309.9 402.7 L1312.4 405.3 L1314.8 404.9 L1316.0 408.9 L1311.1 409.7 L1306.3 408.4 L1301.4 410.2 L1297.7 411.9 L1293.4 417.1 L1291.0 421.9 L1296.5 415.6 L1294.1 422.3 L1292.8 427.4 L1291.6 435.0 L1292.2 439.1 L1293.4 444.1 L1295.9 446.3 L1299.5 444.9 L1302.0 438.3 L1302.0 432.5 L1300.2 426.6 L1302.0 420.6 L1305.6 417.1 L1309.3 412.8 L1310.8 411.2 L1314.8 413.7 L1319.1 417.1 L1319.1 421.4 L1316.0 426.6 L1319.1 427.0 L1322.1 426.1 L1324.6 435.0 L1322.4 439.9 L1320.9 443.2 L1318.8 445.4 L1323.9 447.3 L1329.4 447.3 L1336.8 443.2 L1341.3 441.0 L1346.5 435.8 L1345.6 432.9 L1352.0 432.0 L1358.7 432.5 L1363.0 430.4 L1362.4 424.9 L1368.5 419.3 L1371.8 418.0 L1391.7 417.9 L1394.1 415.4 L1395.9 414.5 L1399.0 410.2 L1400.8 403.1 L1405.5 396.4 L1411.8 397.3 L1414.2 399.8 L1414.3 410.2 L1416.4 412.8 L1419.1 418.9 L1416.1 422.3 L1410.0 424.0 L1406.3 426.6 L1399.6 429.5 L1396.5 434.1 L1395.9 438.3 L1394.7 440.8 L1397.1 443.6 L1400.8 442.8 L1401.1 445.7 L1397.8 446.9 L1394.1 447.3 L1392.3 447.7 L1389.2 449.0 L1383.1 449.4 L1378.2 451.8 L1377.0 454.6 L1376.4 455.8 L1375.8 461.0 L1370.9 467.9 L1369.7 468.9 L1370.0 471.6 L1369.1 475.1 L1366.0 479.0 L1364.5 481.6 L1364.2 483.6 L1364.8 486.2 L1367.3 493.4 L1367.3 496.4 L1364.2 497.9 L1361.2 500.5 L1355.1 502.3 L1352.3 506.4 L1349.0 506.4 L1344.7 511.1 L1340.4 514.4 L1335.5 518.4 L1333.1 520.9 L1331.3 526.3 L1331.0 531.2 L1332.5 536.9 L1336.1 543.9 L1336.1 547.3 L1339.2 555.6 L1339.2 561.7 L1337.4 567.1 L1334.3 567.8 L1332.5 564.4 L1328.8 559.7 L1325.8 554.9 L1323.3 551.5 L1322.7 546.6 L1323.3 541.8 L1319.7 538.3 L1316.0 534.1 L1313.0 534.1 L1308.7 536.2 L1306.9 534.8 L1302.0 531.2 L1295.9 531.6 L1291.0 532.3 L1288.6 531.6 L1283.1 531.9 L1281.2 533.0 L1283.7 539.3 L1282.5 541.4 L1279.4 539.0 L1276.4 540.4 L1271.5 539.3 L1266.6 537.2 L1260.5 535.8 L1255.3 536.2 L1250.1 538.6 L1246.5 541.8 L1239.8 545.6 L1236.1 549.4 L1234.3 552.8 L1233.7 557.6 L1235.2 562.0 L1233.1 562.4 L1228.2 560.7 L1223.3 558.3 L1220.9 551.5 L1216.0 545.9 L1213.5 540.4 L1209.3 535.7 L1203.2 535.5 L1200.1 539.7 L1198.6 541.3 L1194.6 539.0 L1190.4 536.2 L1187.9 529.8 L1181.8 524.8 L1178.2 521.4 L1167.8 521.4 L1167.8 524.6 L1150.3 524.6 L1127.5 516.3 L1128.0 514.6 L1113.4 516.0 L1112.3 511.9 L1108.6 508.2 L1105.6 506.7 L1105.0 505.1 L1100.7 504.2 L1098.2 502.3 L1093.1 502.0 L1091.8 498.6 L1090.3 494.9 L1084.2 488.1 L1084.2 483.2 L1081.2 481.3 L1080.6 476.7 L1077.5 475.1 L1073.2 468.1 L1072.3 461.0 L1069.3 457.0 L1070.8 451.4 L1070.2 443.2 L1068.4 436.6 L1070.8 429.1 L1071.7 416.3 L1071.7 407.5 L1070.8 401.3 L1067.4 392.3 Z" fill="#f1e4fc" stroke="#dccbe8" stroke-width="0.8" stroke-linejoin="round"/>
<path d="M1293.4 527.0 L1309.3 527.0 L1309.9 529.1 L1326.4 530.0 L1327.6 528.4 L1330.7 529.0 L1331.0 531.2 L1332.5 536.9 L1336.1 543.9 L1336.1 547.3 L1339.2 555.6 L1339.2 561.7 L1337.4 567.1 L1334.3 567.8 L1332.5 564.4 L1328.8 559.7 L1325.8 554.9 L1323.3 551.5 L1322.7 546.6 L1323.3 541.8 L1319.7 538.3 L1316.0 534.1 L1313.0 534.1 L1308.7 536.2 L1306.9 534.8 L1302.0 531.2 L1295.9 531.6 L1294.1 531.9 Z" fill="url(#hatch)" stroke="#dccbe8" stroke-width="0.8" stroke-linejoin="round"/>
<path d="M1199.2 486.6 L1217.8 486.6 L1217.8 501.1 L1222.7 503.8 L1233.1 506.0 L1242.2 506.7 L1247.1 506.0 L1251.4 508.2 L1254.2 508.6 L1254.2 519.8 L1256.2 527.0 L1257.2 530.5 L1255.3 536.2 L1250.1 538.6 L1246.5 541.8 L1239.8 545.6 L1236.1 549.4 L1234.3 552.8 L1233.7 557.6 L1235.2 562.0 L1233.1 562.4 L1228.2 560.7 L1223.3 558.3 L1220.9 551.5 L1216.0 545.9 L1213.5 540.4 L1209.3 535.7 L1203.2 535.5 L1200.1 539.7 L1198.6 541.3 L1194.6 539.0 L1190.4 536.2 L1187.9 529.8 L1181.8 524.8 L1178.2 521.4 L1177.5 519.8 L1199.2 519.8 Z" fill="#efefef" stroke="#d6d6d6" stroke-width="0.8"/>
<path d="M1079.9 387.7 L1081.2 392.3 L1080.6 395.9 L1078.1 399.5 L1079.9 396.8 L1079.3 392.3 L1078.7 388.7 Z" fill="#e2d2ee" stroke="#dccbe8" stroke-width="0.8"/>
<path d="M1071.4 407.1 L1077.5 408.4 L1088.5 412.8 L1101.9 409.9 L1114.7 409.3" fill="none" stroke="#dccbe8" stroke-width="0.8" stroke-linejoin="round"/>
<path d="M1113.9 382.2 L1113.9 405.8 L1114.7 409.3 L1117.2 413.7 L1114.7 419.7 L1112.9 424.0 L1114.1 428.2 L1113.9 443.2" fill="none" stroke="#dccbe8" stroke-width="0.8" stroke-linejoin="round"/>
<path d="M1070.2 443.2 L1150.4 443.2" fill="none" stroke="#dccbe8" stroke-width="0.8" stroke-linejoin="round"/>
<path d="M1095.8 443.2 L1095.8 467.3 L1128.7 497.9 L1129.4 505.3 L1128.0 514.6" fill="none" stroke="#dccbe8" stroke-width="0.8" stroke-linejoin="round"/>
<path d="M1132.1 443.2 L1132.1 489.6 L1128.1 490.4 L1128.7 497.9" fill="none" stroke="#dccbe8" stroke-width="0.8" stroke-linejoin="round"/>
<path d="M1119.9 382.2 L1119.9 392.3 L1122.0 396.8 L1128.7 404.0 L1130.0 410.2 L1133.6 413.7 L1138.5 422.3 L1143.4 422.3 L1150.4 422.3 L1150.4 451.4 L1162.6 451.4" fill="none" stroke="#dccbe8" stroke-width="0.8" stroke-linejoin="round"/>
<path d="M1150.4 418.0 L1193.1 418.0" fill="none" stroke="#dccbe8" stroke-width="0.8" stroke-linejoin="round"/>
<path d="M1150.4 418.0 L1150.4 422.3" fill="none" stroke="#dccbe8" stroke-width="0.8" stroke-linejoin="round"/>
<path d="M1150.4 451.4 L1205.3 451.4" fill="none" stroke="#dccbe8" stroke-width="0.8" stroke-linejoin="round"/>
<path d="M1162.6 451.4 L1162.6 524.6" fill="none" stroke="#dccbe8" stroke-width="0.8" stroke-linejoin="round"/>
<path d="M1132.1 482.8 L1250.6 482.8" fill="none" stroke="#dccbe8" stroke-width="0.8" stroke-linejoin="round"/>
<path d="M1205.3 451.4 L1205.3 482.8" fill="none" stroke="#dccbe8" stroke-width="0.8" stroke-linejoin="round"/>
<path d="M1205.3 459.4 L1246.5 459.4" fill="none" stroke="#dccbe8" stroke-width="0.8" stroke-linejoin="round"/>
<path d="M1199.5 482.8 L1199.2 519.8" fill="none" stroke="#dccbe8" stroke-width="0.8" stroke-linejoin="round"/>
<path d="M1193.1 382.2 L1193.1 451.4" fill="none" stroke="#dccbe8" stroke-width="0.8" stroke-linejoin="round"/>
<path d="M1193.1 409.8 L1238.8 409.8" fill="none" stroke="#dccbe8" stroke-width="0.8" stroke-linejoin="round"/>
<path d="M1193.1 435.0 L1227.0 435.0 L1234.9 436.6 L1239.2 439.1" fill="none" stroke="#dccbe8" stroke-width="0.8" stroke-linejoin="round"/>
<path d="M1234.9 382.2 L1238.5 409.3 L1238.8 409.8 L1239.5 415.4 L1239.5 430.8 L1239.2 439.1 L1242.2 447.3 L1243.4 454.6 L1246.5 459.4 L1248.9 462.6 L1250.7 466.5 L1250.6 482.8 L1250.6 486.6 L1251.7 494.9 L1251.4 508.2" fill="none" stroke="#dccbe8" stroke-width="0.8" stroke-linejoin="round"/>
<path d="M1239.5 430.8 L1271.5 430.8" fill="none" stroke="#dccbe8" stroke-width="0.8" stroke-linejoin="round"/>
<path d="M1243.6 454.8 L1270.3 454.6" fill="none" stroke="#dccbe8" stroke-width="0.8" stroke-linejoin="round"/>
<path d="M1250.6 486.6 L1277.9 486.6 L1278.2 490.4 L1280.6 490.4" fill="none" stroke="#dccbe8" stroke-width="0.8" stroke-linejoin="round"/>
<path d="M1254.2 512.6 L1271.8 512.6" fill="none" stroke="#dccbe8" stroke-width="0.8" stroke-linejoin="round"/>
<path d="M1266.0 402.7 L1264.8 408.4 L1261.7 412.8 L1262.3 420.6 L1271.5 430.8 L1274.8 439.1 L1277.6 444.9 L1272.7 449.8 L1270.3 456.2 L1277.6 468.9 L1281.9 480.5 L1284.3 482.8 L1281.9 486.6 L1280.6 490.4 L1278.2 497.9 L1272.7 505.3 L1271.8 512.6 L1270.3 519.8 L1269.0 527.0 L1280.6 527.0 L1281.2 533.0" fill="none" stroke="#dccbe8" stroke-width="0.8" stroke-linejoin="round"/>
<path d="M1274.8 439.1 L1292.2 439.1" fill="none" stroke="#dccbe8" stroke-width="0.8" stroke-linejoin="round"/>
<path d="M1276.4 404.3 L1278.2 406.7 L1284.9 409.7 L1291.0 411.9 L1293.4 417.1" fill="none" stroke="#dccbe8" stroke-width="0.8" stroke-linejoin="round"/>
<path d="M1293.9 445.7 L1293.9 464.9 L1293.4 468.1 L1291.6 475.9 L1290.4 479.0 L1284.3 482.8" fill="none" stroke="#dccbe8" stroke-width="0.8" stroke-linejoin="round"/>
<path d="M1290.4 475.9 L1297.1 475.9 L1303.2 475.1 L1306.3 471.2 L1310.5 466.5 L1317.2 470.4 L1323.9 472.0 L1328.8 466.5 L1334.3 461.8 L1336.6 454.6 L1336.6 443.2" fill="none" stroke="#dccbe8" stroke-width="0.8" stroke-linejoin="round"/>
<path d="M1295.9 445.2 L1318.8 445.4" fill="none" stroke="#dccbe8" stroke-width="0.8" stroke-linejoin="round"/>
<path d="M1310.5 445.7 L1310.5 466.5" fill="none" stroke="#dccbe8" stroke-width="0.8" stroke-linejoin="round"/>
<path d="M1323.9 472.0 L1326.4 478.2 L1317.2 485.8 L1290.7 485.8 L1281.9 486.6" fill="none" stroke="#dccbe8" stroke-width="0.8" stroke-linejoin="round"/>
<path d="M1277.0 497.9 L1320.9 497.9" fill="none" stroke="#dccbe8" stroke-width="0.8" stroke-linejoin="round"/>
<path d="M1313.6 497.9 L1327.6 489.6 L1329.4 485.8" fill="none" stroke="#dccbe8" stroke-width="0.8" stroke-linejoin="round"/>
<path d="M1317.2 485.8 L1364.8 486.2" fill="none" stroke="#dccbe8" stroke-width="0.8" stroke-linejoin="round"/>
<path d="M1289.8 497.9 L1290.4 519.8 L1288.6 531.6" fill="none" stroke="#dccbe8" stroke-width="0.8" stroke-linejoin="round"/>
<path d="M1305.6 497.9 L1309.3 519.8 L1309.3 527.0" fill="none" stroke="#dccbe8" stroke-width="0.8" stroke-linejoin="round"/>
<path d="M1293.4 527.0 L1294.1 531.9" fill="none" stroke="#dccbe8" stroke-width="0.8" stroke-linejoin="round"/>
<path d="M1320.9 497.9 L1327.6 506.7 L1333.7 519.1" fill="none" stroke="#dccbe8" stroke-width="0.8" stroke-linejoin="round"/>
<path d="M1320.9 497.9 L1325.8 496.4 L1334.3 497.1 L1334.9 499.4 L1341.6 499.4 L1349.0 506.4" fill="none" stroke="#dccbe8" stroke-width="0.8" stroke-linejoin="round"/>
<path d="M1326.4 478.2 L1333.7 480.5 L1338.0 479.0 L1342.9 472.0 L1349.6 465.7 L1353.8 464.9" fill="none" stroke="#dccbe8" stroke-width="0.8" stroke-linejoin="round"/>
<path d="M1336.6 454.6 L1336.6 461.6 L1343.0 461.6 L1343.0 465.7 L1349.6 462.6 L1353.8 464.9 L1358.1 468.9 L1362.4 475.1" fill="none" stroke="#dccbe8" stroke-width="0.8" stroke-linejoin="round"/>
<path d="M1336.6 461.6 L1365.4 461.6 L1365.4 471.6 L1370.0 471.6" fill="none" stroke="#dccbe8" stroke-width="0.8" stroke-linejoin="round"/>
<path d="M1341.3 443.2 L1368.2 443.2 L1369.7 444.9 L1372.1 448.5 L1369.7 453.0 L1371.5 457.8 L1367.3 461.0" fill="none" stroke="#dccbe8" stroke-width="0.8" stroke-linejoin="round"/>
<path d="M1372.1 448.5 L1376.4 451.4" fill="none" stroke="#dccbe8" stroke-width="0.8" stroke-linejoin="round"/>
<path d="M1378.2 450.6 L1379.5 442.8 L1381.0 437.0 L1380.1 418.0" fill="none" stroke="#dccbe8" stroke-width="0.8" stroke-linejoin="round"/>
<path d="M1379.5 442.8 L1389.8 443.1 L1392.3 443.2 L1394.1 447.3" fill="none" stroke="#dccbe8" stroke-width="0.8" stroke-linejoin="round"/>
<path d="M1389.8 443.1 L1389.5 449.0" fill="none" stroke="#dccbe8" stroke-width="0.8" stroke-linejoin="round"/>
<path d="M1381.0 437.0 L1392.9 437.5 L1395.9 435.8" fill="none" stroke="#dccbe8" stroke-width="0.8" stroke-linejoin="round"/>
<path d="M1385.2 437.2 L1388.6 429.9 L1391.7 418.0" fill="none" stroke="#dccbe8" stroke-width="0.8" stroke-linejoin="round"/>
<path d="M1395.9 434.1 L1394.4 415.4" fill="none" stroke="#dccbe8" stroke-width="0.8" stroke-linejoin="round"/>
<path d="M1100.0 525.4 L1110.5 529.0 L1120.6 531.2 L1120.6 560.8 L1123.5 561.5 L1127.8 562.6 L1121.3 562.6 L1114.8 560.4 L1109.1 559.0 L1104.7 561.8 L1100.4 566.9 L1098.2 565.5 L1093.2 564.0 L1087.4 560.4 L1088.9 556.1 L1091.7 551.0 L1087.4 548.1 L1085.3 545.3 L1091.7 543.1 L1086.7 535.5 L1091.0 532.3 L1095.4 527.2 Z" fill="#f1e4fc" stroke="#dccbe8" stroke-width="0.8"/>
<path d="M1104.7 561.8 L1100.4 566.9 L1092.5 573.4 L1081.6 578.4 L1070.8 581.3 L1065.1 580.6 L1078.8 579.2 L1090.3 572.7 L1098.2 565.5 Z" fill="#e0d0ec" stroke="#dccbe8" stroke-width="0.6"/>
<path d="M1121.3 562.6 L1127.8 562.6 L1135.0 572.0 L1132.2 574.8 L1126.4 567.6 Z" fill="#dccbe8"/>
<circle cx="1200.30" cy="582.00" r="3.5" fill="#efe2fa" stroke="#dccbe8" stroke-width="0.6"/>
<circle cx="1194.20" cy="575.20" r="1.9" fill="#efe2fa" stroke="#dccbe8" stroke-width="0.6"/>
<circle cx="1186.40" cy="571.20" r="1.5" fill="#efe2fa" stroke="#dccbe8" stroke-width="0.6"/>
<circle cx="1177.90" cy="568.30" r="1.4" fill="#efe2fa" stroke="#dccbe8" stroke-width="0.6"/>
<text x="1024.00" y="592.70" font-size="11.5" fill="#222222" >0</text>
<rect x="1037.00" y="584.00" width="117.40" height="9.70" fill="url(#legGrad)" />
<text x="1160.40" y="592.70" font-size="11.5" fill="#222222" >479</text>
</svg>
</body></html>
